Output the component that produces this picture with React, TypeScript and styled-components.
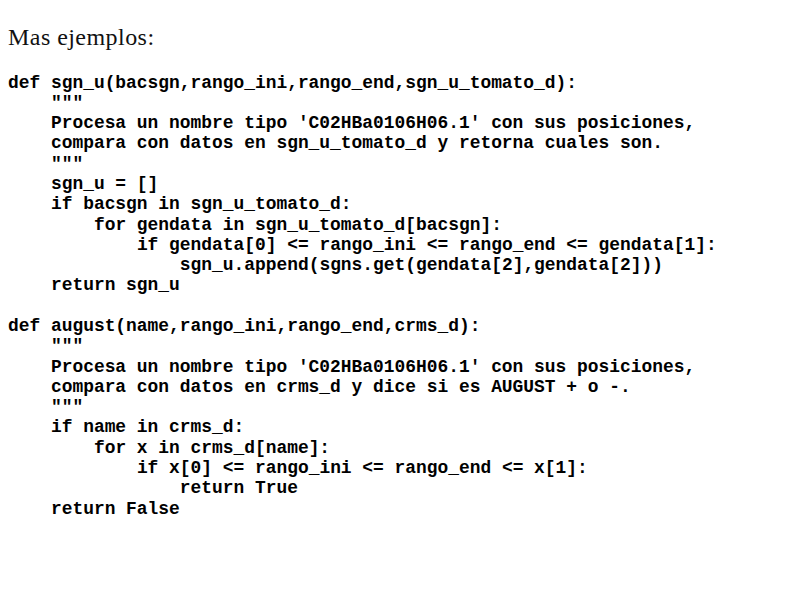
import React from "react";
import styled, { createGlobalStyle } from "styled-components";

const GlobalStyle = createGlobalStyle`
  html, body {
    margin: 0;
    padding: 0;
    background: #ffffff;
  }
  body {
    width: 794px;
    height: 595px;
    overflow: hidden;
  }
`;

const Slide = styled.main`
  width: 794px;
  height: 595px;
  box-sizing: border-box;
  padding: 25px 0 0 8px;
  display: flex;
  flex-direction: column;
  background: #ffffff;
  color: #000000;
`;

const Title = styled.h1`
  margin: 0;
  font-family: "Liberation Serif", "Times New Roman", serif;
  font-weight: normal;
  font-size: 24px;
  line-height: 24px;
  letter-spacing: 0.45px;
  color: #111111;
`;

const Code = styled.div`
  margin-top: 23.6px;
  display: flex;
  flex-direction: column;
  font-family: "Courier New", "Nimbus Mono PS", "Nimbus Mono L", FreeMono,
    Courier, "Liberation Mono", monospace;
  font-weight: bold;
  font-size: 17.9px;
  line-height: 20.29px;
  color: #000000;
`;

const Line = styled.div<{ $indent: number }>`
  white-space: pre;
  height: 20.29px;
  padding-left: ${(p) => p.$indent * 4 * 10.74}px;
`;

type L = [number, string];

const lines: L[] = [
  [0, "def sgn_u(bacsgn,rango_ini,rango_end,sgn_u_tomato_d):"],
  [1, '"""'],
  [1, "Procesa un nombre tipo 'C02HBa0106H06.1' con sus posiciones,"],
  [1, "compara con datos en sgn_u_tomato_d y retorna cuales son."],
  [1, '"""'],
  [1, "sgn_u = []"],
  [1, "if bacsgn in sgn_u_tomato_d:"],
  [2, "for gendata in sgn_u_tomato_d[bacsgn]:"],
  [3, "if gendata[0] <= rango_ini <= rango_end <= gendata[1]:"],
  [4, "sgn_u.append(sgns.get(gendata[2],gendata[2]))"],
  [1, "return sgn_u"],
  [0, ""],
  [0, "def august(name,rango_ini,rango_end,crms_d):"],
  [1, '"""'],
  [1, "Procesa un nombre tipo 'C02HBa0106H06.1' con sus posiciones,"],
  [1, "compara con datos en crms_d y dice si es AUGUST + o -."],
  [1, '"""'],
  [1, "if name in crms_d:"],
  [2, "for x in crms_d[name]:"],
  [3, "if x[0] <= rango_ini <= rango_end <= x[1]:"],
  [4, "return True"],
  [1, "return False"],
];

export default function App() {
  return (
    <>
      <GlobalStyle />
      <Slide>
        <Title>Mas ejemplos:</Title>
        <Code>
          {lines.map(([indent, text], i) => (
            <Line key={i} $indent={indent}>
              {text}
            </Line>
          ))}
        </Code>
      </Slide>
    </>
  );
}
